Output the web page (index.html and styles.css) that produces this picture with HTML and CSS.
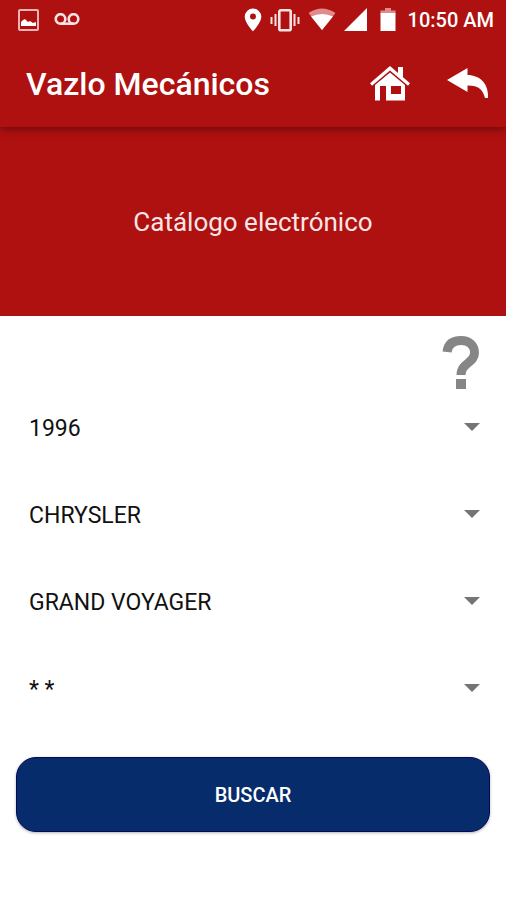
FILE: index.html
```
<!doctype html>
<html lang="es">
<head>
<meta charset="utf-8">
<meta name="viewport" content="width=device-width, initial-scale=1">
<title>Vazlo Mecánicos</title>
<link rel="stylesheet" href="styles.css">
</head>

<body>
<header class="header">
	<div class="status">
		<svg width="21" height="22" viewBox="0 0 21 22"><rect x="1" y="1" width="19" height="20" rx="1" fill="none" stroke="#f0b4b4" stroke-width="2"/><path d="M3 17V13l2-2 2-1 3 3 2-1 3 2 3-1v4H3z" fill="#fff"/></svg>
		<svg class="voicemail" width="26" height="14" viewBox="0 0 26 14" fill="none" stroke="#fbe3e3" stroke-width="2.6"><circle cx="6.5" cy="6" r="4.8"/><circle cx="19.5" cy="6" r="4.8"/><path d="M6.500 10.700h13"/></svg>
		<div class="status-right">
			<svg width="18" height="24" viewBox="0 0 18 24"><path fill="#fff" fill-rule="evenodd" d="M9 0.500a8.300 8.300 0 0 0-8.300 8.300C.7 14.500 9 23.500 9 23.500s8.300-9 8.300-14.700A8.300 8.300 0 0 0 9 .5zM9 5.500a3 3 0 1 1 0 6 3 3 0 0 1 0-6z"/></svg>
			<svg width="30" height="24" viewBox="0 0 30 24" fill="none" stroke="#fbe3e3"><rect x="9.300" y="2.300" width="11.400" height="20" rx="1.500" stroke-width="2.600"/><path stroke-width="2" d="M5.500 6v12M24.500 6v12M1.500 9v7M28.500 9v7"/></svg>
			<svg width="28" height="24" viewBox="0 0 28 24"><path fill="#e08c8c" d="M0.500 5Q14-4 27.500 5L14 22z"/><path fill="#fff" d="M3 8.500Q14 3.500 25 8.500L14 22z"/></svg>
			<svg width="24" height="24" viewBox="0 0 24 24"><path fill="#fff" d="M0 23L23 0v23z"/></svg>
			<svg class="battery" width="16" height="24" viewBox="0 0 16 24"><path fill="#df8b8b" d="M0.500 6V2.500H5V0h6v2.500h4.500V6z"/><path fill="#fff" d="M.5 5h15v18H.5z"/></svg>
			<span class="time">10:50 AM</span>
		</div>
	</div>
	<div class="toolbar">
		<h1 class="title">Vazlo Mecánicos</h1>
		<button class="tool" type="button" aria-label="Inicio">
			<svg width="42" height="36" viewBox="0 0 42 36"><path fill="#fff" d="M21 0l8 7V1h5v10.300l7 6-2 2.500L21 4.500 3 19.800l-2-2.500z"/><path fill="#fff" fill-rule="evenodd" d="M21 6.500L36 19v15.500H17V20h-6v14.500H6V19zM22 20v8h10v-8z"/></svg>
		</button>
		<button class="tool" type="button" aria-label="Regresar">
			<svg width="42" height="32" viewBox="0 0 42 32"><path fill="#fff" d="M0 12L20.500 0v7C33 7 42 16 41 30h-3C36 22 32 17.500 20.500 17.500v6.500z"/></svg>
		</button>
	</div>
</header>

<section class="banner">
	<h2 class="banner-text">Catálogo electrónico</h2>
</section>

<form class="search">
	<button class="help" type="button" aria-label="Ayuda">
		<svg width="38" height="54" viewBox="0 0 38 54"><path fill="none" stroke="#868686" stroke-width="9" d="M5 16C6 8 11 4.500 19 4.500S32.500 9 32.500 17C32.500 27 19 27 19 39"/><path fill="#868686" d="M14 43h10v10H14z"/></svg>
	</button>
	<div class="field">
		<select class="select" aria-label="Año"><option>1996</option></select>
		<svg class="arrow" width="16" height="8" viewBox="0 0 16 8"><path d="M0 0h16L8 8z"/></svg>
	</div>
	<div class="field">
		<select class="select" aria-label="Marca"><option>CHRYSLER</option></select>
		<svg class="arrow" width="16" height="8" viewBox="0 0 16 8"><path d="M0 0h16L8 8z"/></svg>
	</div>
	<div class="field">
		<select class="select" aria-label="Modelo"><option>GRAND VOYAGER</option></select>
		<svg class="arrow" width="16" height="8" viewBox="0 0 16 8"><path d="M0 0h16L8 8z"/></svg>
	</div>
	<div class="field">
		<select class="select" aria-label="Motor"><option>* *</option></select>
		<svg class="arrow" width="16" height="8" viewBox="0 0 16 8"><path d="M0 0h16L8 8z"/></svg>
	</div>
	<button class="submit" type="button">BUSCAR</button>
</form>
</body>
</html>
```

FILE: styles.css
```
*{margin:0; padding:0; box-sizing:border-box;}
body{background:#fff; font-family:Roboto, "Liberation Sans", sans-serif;}
svg{display:block; flex:none;}
button{border:0; background:none; font-family:inherit; cursor:pointer;}

.header{position:relative; background:#af1010; color:#fff; box-shadow:0 2px 8px rgba(0,0,0,.4);}
.status{display:flex; align-items:center; height:40px; padding:0 12px 0 18px;}
.voicemail{margin-left:15px;}
.status-right{display:flex; align-items:center; gap:8px; margin-left:auto;}
.battery{margin:0 4px;}
.time{font-size:20px; font-weight:500; line-height:24px;}

.toolbar{display:flex; align-items:center; gap:36px; height:87px; padding:0 17px 0 26px;}
.title{flex:1; font-size:32px; font-weight:500; line-height:40px; white-space:nowrap;}

.banner{display:flex; align-items:center; justify-content:center; height:189px; background:#af1010; color:#fbe6e6;}
.banner-text{font-size:26px; font-weight:400; line-height:32px;}

.search{display:flex; flex-direction:column; gap:40px; padding:20px 16px;}
.help{align-self:flex-end; margin:0 10px -25px 0;}
.field{position:relative;}
.select{display:block; width:100%; height:47px; padding:0 48px 0 13px; border:0; background:none; appearance:none; font-family:inherit; font-size:23px; color:#111;}
.arrow{position:absolute; right:10px; top:18px; fill:#757575; pointer-events:none;}
.submit{height:75px; margin-top:4px; border:1px solid #04085c; border-radius:20px; background:#062c6b; color:#fff; font-size:20px; font-weight:500; box-shadow:0 1px 3px rgba(0,0,0,.3);}
```
